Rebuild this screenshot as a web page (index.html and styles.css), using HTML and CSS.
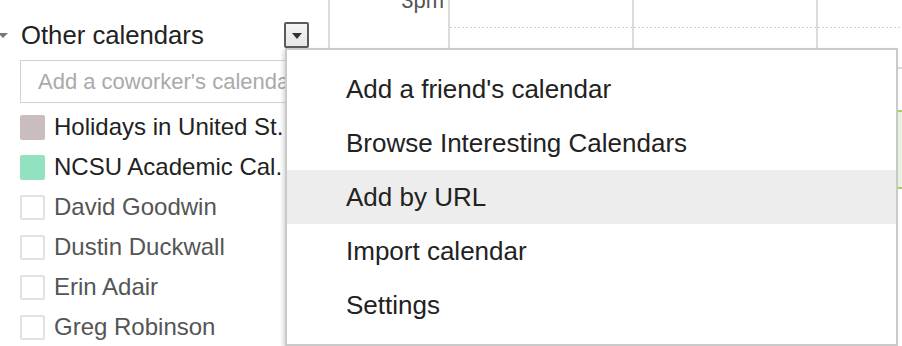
FILE: index.html
```html
<!DOCTYPE html>
<html>
<head>
  <meta charset="UTF-8">
  <meta name="viewport" content="width=device-width, initial-scale=1.0">
  <link rel="stylesheet" href="styles.css">
</head>
<body>
  <div class="page">
    <div class="sidebar">
      <div class="cal-head">
        <span class="caret"></span>
        <span class="cal-title">Other calendars</span>
        <button class="menu-btn"><span class="menu-arrow"></span></button>
      </div>

      <input class="cal-search" type="text" placeholder="Add a coworker's calendar">

      <ul class="cal-list">
        <li><span class="swatch holidays"></span>Holidays in United St.</li>
        <li><span class="swatch ncsu"></span>NCSU Academic Cal.</li>
        <li class="muted"><span class="swatch empty"></span>David Goodwin</li>
        <li class="muted"><span class="swatch empty"></span>Dustin Duckwall</li>
        <li class="muted"><span class="swatch empty"></span>Erin Adair</li>
        <li class="muted"><span class="swatch empty"></span>Greg Robinson</li>
      </ul>
    </div>

    <div class="grid">
      <div class="time-col"><span class="time-label">3pm</span></div>
      <div class="day-col"></div>
      <div class="day-col"></div>
      <div class="day-col last">
        <div class="event"></div>
      </div>
    </div>
  </div>

  <ul class="dropdown">
    <li>Add a friend's calendar</li>
    <li>Browse Interesting Calendars</li>
    <li class="active">Add by URL</li>
    <li>Import calendar</li>
    <li>Settings</li>
  </ul>
</body>
</html>
```

FILE: styles.css
```css
* {
  box-sizing: border-box;
  margin: 0;
  padding: 0;
}

body {
  font-family: "Liberation Sans", Arial, sans-serif;
  background: #ffffff;
  color: #222;
  width: 902px;
  height: 346px;
  overflow: hidden;
  position: relative;
}

.page {
  display: flex;
  height: 346px;
}

/* left column */
.sidebar {
  width: 328px;
  flex-shrink: 0;
  padding-right: 19px;
}

.cal-head {
  display: flex;
  align-items: center;
  height: 26px;
  margin-top: 22px;
}

.caret {
  width: 0;
  height: 0;
  border-left: 5px solid transparent;
  border-right: 5px solid transparent;
  border-top: 5px solid #777;
  margin-left: -2px;
  margin-top: 1px;
}

.cal-title {
  font-size: 25.7px;
  margin-left: 13px;
  color: #222;
}

.menu-btn {
  margin-left: auto;
  width: 25px;
  height: 26px;
  border: 2px solid #5a5a5a;
  border-radius: 2px;
  background: linear-gradient(#f4f4f4, #e6e6e6);
  display: flex;
  align-items: center;
  justify-content: center;
}

.menu-arrow {
  width: 0;
  height: 0;
  border-left: 5px solid transparent;
  border-right: 5px solid transparent;
  border-top: 6px solid #333;
  margin-top: 2px;
}

.cal-search {
  display: block;
  margin: 12px 0 0 20px;
  width: 300px;
  height: 43px;
  border: 1px solid #d2d2d2;
  padding-left: 17px;
  font-family: inherit;
  font-size: 22px;
  color: #222;
  outline: none;
}

.cal-search::placeholder {
  color: #aaa;
}

.cal-list {
  list-style: none;
  margin-top: 4px;
}

.cal-list li {
  display: flex;
  align-items: center;
  gap: 9px;
  height: 40px;
  padding-left: 20px;
  font-size: 24px;
  color: #222;
  white-space: nowrap;
}

.cal-list li.muted {
  color: #555;
}

.swatch {
  width: 25px;
  height: 25px;
  border-radius: 2px;
  flex-shrink: 0;
}

.swatch.holidays {
  background: #c9bdbe;
}

.swatch.ncsu {
  background: #92e1c1;
}

.swatch.empty {
  border: 2px solid #e2e2e2;
}

/* calendar grid behind the menu */
.grid {
  flex: 1;
  display: flex;
  border-left: 2px solid #dcdcdc;
}

.time-col {
  width: 120px;
  border-right: 2px solid #dcdcdc;
  text-align: right;
  padding-right: 4px;
}

.time-label {
  display: block;
  font-size: 22px;
  color: #555;
  margin-top: -12px;
}

.day-col {
  width: 184px;
  border-right: 2px solid #dcdcdc;
  background: linear-gradient(to right, #cfcfcf 50%, transparent 0) 0 27px / 4px 1px repeat-x;
}

.day-col.last {
  flex: 1;
  border-right: none;
  position: relative;
  background:
    linear-gradient(to right, #cfcfcf 50%, transparent 0) 0 27px / 4px 1px repeat-x,
    linear-gradient(#dcdcdc, #dcdcdc) 0 67px / 100% 2px no-repeat;
}

.event {
  position: absolute;
  left: 78px;
  right: 0;
  top: 110px;
  height: 79px;
  background: #eaf3df;
  border-top: 2px solid #a6d25f;
  border-bottom: 2px solid #a6d25f;
}

/* overflow menu */
.dropdown {
  position: absolute;
  left: 285px;
  top: 48px;
  width: 613px;
  height: 298px;
  list-style: none;
  background: #fff;
  border: 2px solid #cacaca;
  box-shadow: -2px 2px 4px rgba(0, 0, 0, 0.15);
  padding-top: 12px;
}

.dropdown li {
  height: 54px;
  line-height: 54px;
  padding-left: 59px;
  font-size: 26px;
  color: #222;
}

.dropdown li.active {
  background: #ededed;
}
```
